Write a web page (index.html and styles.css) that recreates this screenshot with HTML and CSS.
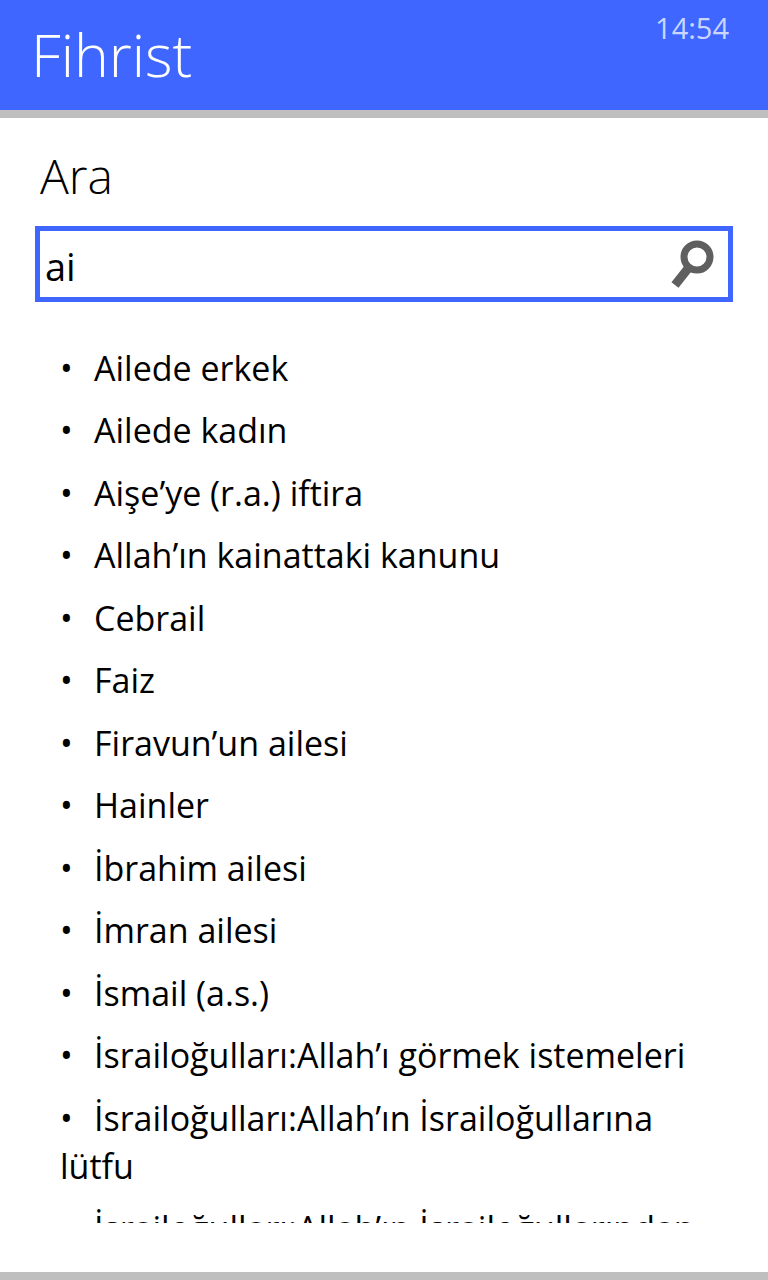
FILE: index.html
```html
<!DOCTYPE html>
<html lang="tr">
<head>
    <meta charset="UTF-8">
    <meta name="viewport" content="width=device-width, initial-scale=1.0">
    <title>Fihrist</title>
    <link rel="stylesheet" href="styles.css">
</head>
<body>
    <header class="header">
        <h1 class="title">Fihrist</h1>
        <time class="clock">14:54</time>
    </header>

    <main class="content">
        <form class="search">
            <label class="search-label" for="search">Ara</label>
            <div class="search-box">
                <input class="search-input" id="search" type="text" value="ai" autocomplete="off">
                <button class="search-button" type="submit" aria-label="Ara">
                    <svg class="search-icon" viewBox="0 0 44 48" aria-hidden="true">
                        <circle cx="27" cy="17" r="13" fill="none" stroke="#5f5f5f" stroke-width="7"/>
                        <path d="M20 26L5 45" fill="none" stroke="#5f5f5f" stroke-width="9"/>
                    </svg>
                </button>
            </div>
        </form>

        <div class="results">
            <ul class="results-list">
                <li>Ailede erkek</li>
                <li>Ailede kadın</li>
                <li>Aişe’ye (r.a.) iftira</li>
                <li>Allah’ın kainattaki kanunu</li>
                <li>Cebrail</li>
                <li>Faiz</li>
                <li>Firavun’un ailesi</li>
                <li>Hainler</li>
                <li>İbrahim ailesi</li>
                <li>İmran ailesi</li>
                <li>İsmail (a.s.)</li>
                <li>İsrailoğulları:Allah’ı görmek istemeleri</li>
                <li>İsrailoğulları:Allah’ın İsrailoğullarına lütfu</li>
                <li>İsrailoğulları:Allah’ın İsrailoğullarından</li>
            </ul>
        </div>
    </main>
</body>
</html>
```
FILE: styles.css
```css
* {
    box-sizing: border-box;
}

body {
    display: flex;
    flex-direction: column;
    height: 100vh;
    margin: 0;
    font-family: "Segoe UI", "Open Sans", "Noto Sans", sans-serif;
    color: #000;
    background-color: #fff;
    border-bottom: 8px solid #bfbfbf;
}

/* header */
.header {
    display: flex;
    justify-content: space-between;
    align-items: flex-start;
    padding: 8px 39px 10px 31px;
    color: #fff;
    background-color: #3f66ff;
    border-bottom: 8px solid #bfbfbf;
}

.title {
    margin: 0;
    font-size: 59px;
    font-weight: 300;
    line-height: 92px;
}

.clock {
    font-size: 29px;
    line-height: 40px;
    color: #cbd6ff;
}

/* search */
.content {
    display: flex;
    flex-direction: column;
    flex: 1;
    min-height: 0;
    padding: 24px 35px 49px;
}

.search-label {
    display: block;
    padding-left: 5px;
    margin-bottom: 16px;
    font-size: 48px;
    font-weight: 300;
    line-height: 68px;
}

.search-box {
    display: flex;
    align-items: center;
    height: 76px;
    border: 5px solid #3f66ff;
}

.search-input {
    flex: 1;
    min-width: 0;
    height: 100%;
    padding: 4px 5px 0;
    font: inherit;
    font-size: 38px;
    color: inherit;
    background: none;
    border: none;
    outline: none;
}

.search-button {
    padding: 0 14px 0 8px;
    background: none;
    border: none;
    cursor: pointer;
}

.search-icon {
    display: block;
    width: 44px;
    height: 48px;
}

/* results */
.results {
    flex: 1;
    min-height: 0;
    margin-top: 42px;
    padding: 0 25px;
    overflow: hidden;
}

.results-list {
    display: grid;
    grid-auto-rows: minmax(62px, auto) minmax(63px, auto);
    margin: 0;
    padding: 0;
    list-style: none;
}

.results-list li {
    padding-bottom: 14px;
    font-size: 34px;
    line-height: 48px;
}

.results-list li::before {
    content: "•";
    display: inline-block;
    width: 34px;
}
```
